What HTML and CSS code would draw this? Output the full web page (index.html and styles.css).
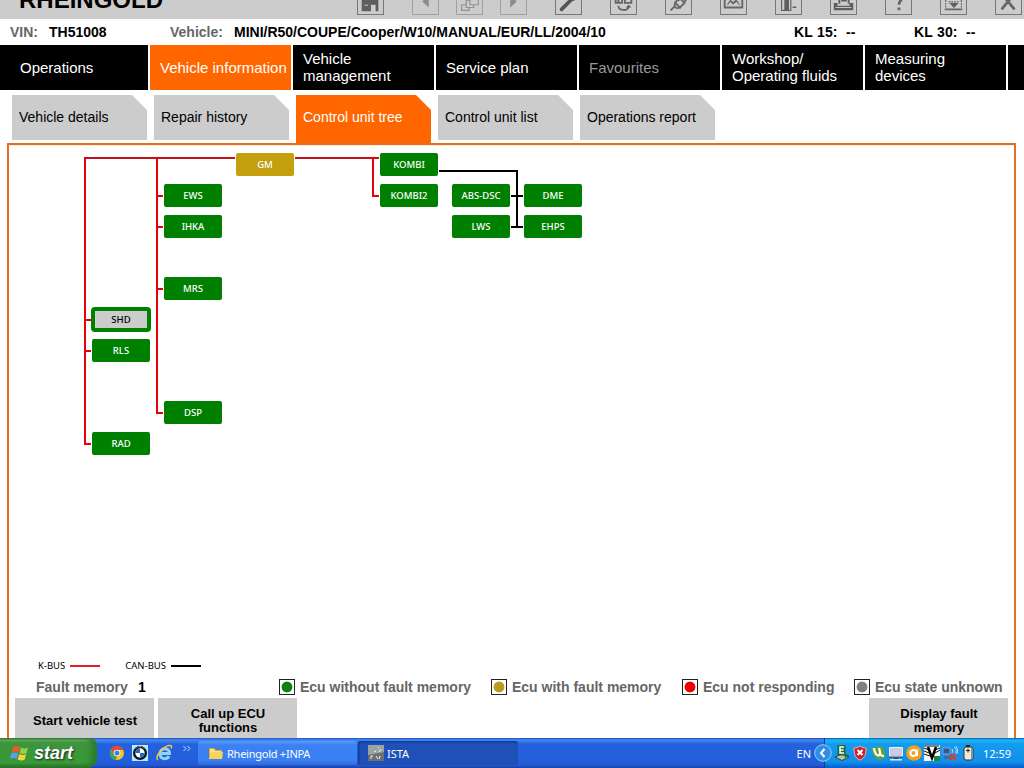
FILE: index.html
```html
<!DOCTYPE html>
<html lang="en">
<head>
  <meta charset="UTF-8">
  <meta name="viewport" content="width=device-width, initial-scale=1.0">
  <title>Rheingold - Control unit tree</title>
  <link rel="stylesheet" href="styles.css">
</head>
<body>
  <div class="screen">
    <!-- Title bar -->
    <header class="titlebar">
      <h1>RHEINGOLD</h1>
      <div class="tools">
        <svg class="tool" viewBox="0 0 27 27"><path class="solid" d="M4 12 13 4l9 8v12h-3v-7h-5v7H4z"/><path class="light" d="M7 17.500h4"/></svg>
        <div class="tool-group">
          <svg class="tool dim" viewBox="0 0 27 27"><path class="solid" d="M17 7v13l-7-6.500z"/></svg>
          <svg class="tool dim" viewBox="0 0 27 27"><path class="line" d="M14 6h9v11h-9zM14 12h-4v8h8v-3M10 17H5v6h8v-3"/></svg>
          <svg class="tool dim" viewBox="0 0 27 27"><path class="solid" d="M10 7v13l7-6.500z"/></svg>
        </div>
        <svg class="tool" viewBox="0 0 27 27"><path class="thick" d="M6 22 17 11"/><path class="line thick2" d="M22 9l-3 3-4-2 1-5"/></svg>
        <svg class="tool" viewBox="0 0 27 27"><path class="line thick2" d="M5 6h7v9H5zM15 6h7v9h-7zM8 18c0 6 11 6 11 1"/><path class="solid" d="M7 12h2v2H7zM17 10h4v2h-4zM16 20l3-3 3 3z"/></svg>
        <svg class="tool" viewBox="0 0 27 27"><path class="line thick2" d="M5 23l4-4M9 14l7 7M10 15c-2 4 1 7 5 5l5-5-6-6zM13 13l5-7M19 15l4-5"/></svg>
        <svg class="tool" viewBox="0 0 27 27"><path class="line thick2" d="M4 6h19v14H4z"/><path class="line" d="M7 17l3-4 3 3 4-3 3 4M5 7l8 8 9-8"/></svg>
        <svg class="tool" viewBox="0 0 27 27"><path class="line" d="M6 5h10v18H6z"/><path class="solid" d="M9 8h5v15H9zM18 19h4v1.500h-4z"/></svg>
        <svg class="tool" viewBox="0 0 27 27"><path class="solid" d="M8 4h12v12h-2V7h-8v9H8zM3 15h4v3h13v-3h4v8H3zM11 12h6v1.500h-6z"/><path class="light" d="M5 20h17"/></svg>
        <svg class="tool" viewBox="0 0 27 27"><path class="line thick3" d="M9 9c0-6 9-5 9-1 0 4-4 4-4 9M14 20v3"/></svg>
        <svg class="tool" viewBox="0 0 27 27"><path class="line thick2" d="M4 5h19M4 22h19"/><path class="line dots" d="M5 6v15M22 6v15M8 14h12"/><path class="solid" d="M9 15h10l-5 5.500z"/></svg>
        <svg class="tool" viewBox="0 0 27 27"><path class="line thick3" d="M6 5l14 17M20 5L6 22"/></svg>
      </div>
    </header>

    <!-- Vehicle info -->
    <div class="infobar">
      <span class="label vin-label">VIN:</span>
      <span class="vin">TH51008</span>
      <span class="label vehicle-label">Vehicle:</span>
      <span class="vehicle">MINI/R50/COUPE/Cooper/W10/MANUAL/EUR/LL/2004/10</span>
      <span class="terminal">KL 15:&nbsp; --</span>
      <span class="terminal">KL 30:&nbsp; --</span>
    </div>

    <nav class="main-nav">
      <a>Operations</a>
      <a class="active">Vehicle information</a>
      <a>Vehicle<br>management</a>
      <a>Service plan</a>
      <a class="disabled">Favourites</a>
      <a>Workshop/<br>Operating fluids</a>
      <a>Measuring<br>devices</a>
      <a></a>
    </nav>

    <nav class="sub-nav">
      <a>Vehicle details</a>
      <a>Repair history</a>
      <a class="active">Control unit tree</a>
      <a>Control unit list</a>
      <a>Operations report</a>
    </nav>

    <main class="panel">
      <!-- Control unit tree -->
      <div class="tree">
        <svg class="bus" width="1005" height="510">
          <g class="k-top">
            <path d="M75 13H226M286 13H370"/>
          </g>
          <g class="k-bus">
            <path d="M76 12V299H82M76 175H82M76 206H82"/>
            <path d="M148 12V268H154M148 51H154M148 82H154M148 144H154"/>
            <path d="M364 12V51H370"/>
          </g>
          <g class="can-bus">
            <path d="M430 26H508V82M502 51H514M502 82H514"/>
          </g>
        </svg>
        <div class="ecu fault gm">GM</div>
        <div class="ecu ews">EWS</div>
        <div class="ecu ihka">IHKA</div>
        <div class="ecu mrs">MRS</div>
        <div class="ecu dsp">DSP</div>
        <div class="ecu selected shd">SHD</div>
        <div class="ecu rls">RLS</div>
        <div class="ecu rad">RAD</div>
        <div class="ecu kombi">KOMBI</div>
        <div class="ecu kombi2">KOMBI2</div>
        <div class="ecu abs">ABS-DSC</div>
        <div class="ecu lws">LWS</div>
        <div class="ecu dme">DME</div>
        <div class="ecu ehps">EHPS</div>
      </div>

      <div class="bus-legend">
        <span>K-BUS</span><i class="k"></i>
        <span>CAN-BUS</span><i class="can"></i>
      </div>

      <div class="status">
        <span class="fault-label">Fault memory</span>
        <span class="fault-count">1</span>
        <span class="state"><i class="green"></i>Ecu without fault memory</span>
        <span class="state with"><i class="gold"></i>Ecu with fault memory</span>
        <span class="state no"><i class="red"></i>Ecu not responding</span>
        <span class="state unknown"><i class="gray"></i>Ecu state unknown</span>
      </div>

      <div class="actions">
        <button>Start vehicle test</button>
        <button>Call up ECU<br>functions</button>
        <button class="last">Display fault<br>memory</button>
      </div>
    </main>

    <!-- Windows taskbar -->
    <footer class="taskbar">
      <div class="start">
        <svg width="20" height="20" viewBox="0 0 20 20">
          <path fill="#ee5a24" d="M3 4q3-2 7 0L8.500 9.500q-3-2-7 0z"/>
          <path fill="#8fd14a" d="M11 4.500q4 2 7 0L16.500 10q-3 2-7 0z"/>
          <path fill="#5b9bf0" d="M1.200 10.500q4-2 7 0L6.700 16q-3-2-7 0z"/>
          <path fill="#fbd03a" d="M9.200 11q4 2 7 0l-1.500 5.500q-3 2-7 0z"/>
        </svg>
        <span>start</span>
      </div>
      <div class="quick">
        <svg width="16" height="16" viewBox="0 0 16 16">
          <circle cx="8" cy="8" r="7" fill="#f2c72e"/>
          <path fill="#dc4a38" d="M1.800 4.500A7 7 0 0 1 14.500 5H8L5 9.500z"/>
          <path fill="#45a350" d="M1.800 4.500 5 9.500l3 2L7 15A7 7 0 0 1 1.800 4.500z"/>
          <circle cx="8" cy="8" r="3.300" fill="#fff"/><circle cx="8" cy="8" r="2.500" fill="#3c7fe0"/>
        </svg>
        <svg width="16" height="16" viewBox="0 0 16 16">
          <path fill="#b4ecff" d="M0 0h16v16H0z"/>
          <circle cx="8" cy="8" r="7" fill="#111"/><circle cx="8" cy="8" r="4.700" fill="#fff"/>
          <path fill="#2467c8" d="M8 8V3.300A4.700 4.700 0 0 0 3.300 8zM8 8v4.700A4.700 4.700 0 0 0 12.700 8z"/>
          <path stroke="#ddd" stroke-width=".8" d="M4 3.500l1-1M7 1.800h2M11 2.500l1 1"/>
        </svg>
        <svg width="18" height="18" viewBox="0 0 18 18">
          <path fill="none" stroke="#8ed4fa" stroke-width="3" d="M5 9.500h9.500C14.500 3 5 3 5 9.800c0 6 7 6 9 2.500"/>
          <path fill="none" stroke="#f4c63c" stroke-width="1.500" d="M3 16C-1 14 7 3 14 1.500c3-.5 3 1 2 3"/>
        </svg>
        <svg class="more" width="8" height="8" viewBox="0 0 8 8"><path d="M.5 1 3 3.500.5 6M4.500 1 7 3.500 4.500 6"/></svg>
      </div>
      <div class="task">
        <svg width="16" height="16" viewBox="0 0 16 16">
          <path fill="#d9a431" d="M1 3h5l2 2h6v9H1z"/><path fill="#fce588" d="M2 4h4l1 2h6v7H2z"/><path fill="#f8d35c" d="M3 7h12l-1 7H1z"/>
        </svg>
        <span>Rheingold +INPA</span>
      </div>
      <div class="task pressed">
        <svg width="16" height="16" viewBox="0 0 16 16">
          <path fill="#6a7173" d="M0 0h16v16H0z"/><path fill="#9ba2a3" d="M0 0h16v7L0 10z"/>
          <path fill="none" stroke="#f4f4f4" d="M3 11v3M3 11h2M8 11l2 3M12 11l-1 3M13 4l-2 3M6 7l2-1M10 2l1 1"/>
        </svg>
        <span>ISTA</span>
      </div>
      <span class="lang">EN</span>
      <div class="tray">
        <svg class="chevron" width="18" height="18" viewBox="0 0 18 18">
          <circle cx="9" cy="9" r="8.300" fill="#2f8fe2" stroke="#8fd0ff"/><path fill="none" stroke="#fff" stroke-width="2" d="M10.500 5 7 9l3.500 4"/>
        </svg>
        <svg width="16" height="16" viewBox="0 0 16 16">
          <path fill="#b9c4b4" stroke="#28482c" d="M1 12l5-2h5l4 2-7 3.500z"/><path fill="#18702c" d="M3.500 0h8v10h-8zM10 9l5 1-4 3z"/>
          <path fill="none" stroke="#fff" stroke-width="1.500" d="M10 2H6v6h4M6 5h3.500"/>
        </svg>
        <svg width="16" height="16" viewBox="0 0 16 16">
          <path fill="#c9202c" stroke="#eeb1b0" d="M8 1c2 1.500 4 2 6 2 0 6-1 10-6 12C3 13 2 9 2 3c2 0 4-.5 6-2z"/><path stroke="#fff" stroke-width="2" d="M5.500 5l5 5M10.500 5l-5 5"/>
        </svg>
        <svg width="16" height="16" viewBox="0 0 16 16">
          <path fill="#5da33c" d="M1 3l10-2c4 2 5 8 4 12l-5 2C5 14 2 10 1 3z"/><path fill="none" stroke="#fff" stroke-width="2.200" d="M4 3c1 9 7 9 6 4L9 3M10 7c0 4 2 4 4 4"/>
        </svg>
        <svg width="16" height="16" viewBox="0 0 16 16">
          <path fill="#c9cbe0" stroke="#f1f1f8" d="M1.500 2.500h13v9h-13z"/><path fill="#3b3d66" d="M1 11.500h14v1H1zM6 13h4v1H6z"/><path fill="#e4e4ee" d="M2 14h12v1.500H2z"/>
        </svg>
        <svg width="16" height="16" viewBox="0 0 16 16">
          <circle cx="8" cy="8" r="7.800" fill="#f5a01f"/><circle cx="7.500" cy="8" r="3" fill="none" stroke="#fff" stroke-width="2"/><path fill="none" stroke="#fff" stroke-width="2" d="M11 4.500V11"/>
        </svg>
        <svg width="16" height="16" viewBox="0 0 16 16">
          <path fill="#f7f7f7" d="M0 0h16v16H0z"/><path fill="none" stroke="#111" d="M0 3l5 2M0 6l5 2M0 9l6 2M11 5l5-2M11 8l5-3M0 1h15"/><path fill="none" stroke="#000" stroke-width="2.500" d="M4 2l4 11 4-11"/><path fill="#188a3c" d="M10 11h6v5h-6z"/>
        </svg>
        <svg width="16" height="16" viewBox="0 0 16 16">
          <path fill="#36588e" stroke="#8db5e5" stroke-width=".8" d="M1 3h7v6H1z"/><path fill="#47689b" d="M2 11h7v3H2z"/><path fill="none" stroke="#bddcff" d="M10 4q2 2 0 4M12 2q4 3 1 7M14 1q3 4 1 8"/><path stroke="#e13b2c" stroke-width="2" d="M8 9l6 6M14 9l-6 6"/>
        </svg>
        <svg width="16" height="16" viewBox="0 0 16 16">
          <rect x="4" y="2" width="9" height="13" rx="2" fill="#eceade" stroke="#34362e"/><path fill="#222" d="M6 0h4v2H6zM6 5h4v1H6zM7.500 3.500h1v4h-1z"/><path fill="#8e9188" d="M11 3h1.500v11H11z"/>
        </svg>
        <span class="clock">12:59</span>
      </div>
    </footer>
  </div>
</body>
</html>
```

FILE: styles.css
```css
* {
  box-sizing: border-box;
}

body {
  margin: 0;
  background: #fff;
  font-family: "Liberation Sans", Arial, sans-serif;
  overflow: hidden;
}

.screen {
  width: 1024px;
  height: 768px;
  display: flex;
  flex-direction: column;
  overflow: hidden;
}

svg {
  display: block;
  flex: none;
}

/* Title bar */
.titlebar {
  height: 19px;
  display: flex;
  align-items: flex-end;
  justify-content: space-between;
  background: #ccc;
  overflow: hidden;
  flex: none;
}

.titlebar h1 {
  margin: 0 0 7px 19px;
  font-size: 24px;
  line-height: 24px;
}

.tools {
  display: flex;
  gap: 28px;
  margin: 0 2px 4px 0;
}

.tool-group {
  display: flex;
  gap: 17px;
}

.tool {
  width: 27px;
  height: 27px;
  border: 1px solid #777;
}

.tool.dim {
  border-color: #999;
  opacity: 0.85;
}

.tool .solid {
  fill: #5e5e5e;
}

.tool.dim .solid {
  fill: #808080;
}

.tool .line {
  fill: none;
  stroke: #666;
  stroke-width: 1.3;
}

.tool.dim .line {
  stroke: #888;
}

.tool .thick {
  stroke: #555;
  stroke-width: 4;
  stroke-linecap: round;
}

.tool .thick2 {
  stroke-width: 2;
}

.tool .thick3 {
  stroke-width: 3;
}

.tool .dots {
  stroke-dasharray: 2 1;
}

.tool .light {
  stroke: #ccc;
}

/* Vehicle info */
.infobar {
  height: 26px;
  display: flex;
  align-items: center;
  padding-left: 10px;
  font-size: 14px;
  font-weight: bold;
  white-space: nowrap;
  flex: none;
}

.infobar span {
  flex: none;
}

.label {
  color: #666;
}

.vin-label {
  width: 39px;
}

.vin {
  width: 121px;
}

.vehicle-label {
  width: 64px;
}

.vehicle {
  width: 560px;
}

.terminal {
  width: 120px;
  letter-spacing: 0.2px;
}

/* Main navigation */
.main-nav {
  height: 45px;
  display: grid;
  grid-template-columns: 148px repeat(6, 141px) 1fr;
  gap: 2px;
  flex: none;
}

.main-nav a {
  display: flex;
  align-items: center;
  padding: 0 0 1px 10px;
  background: #000;
  color: #fff;
  font-size: 15px;
  line-height: 17px;
  white-space: nowrap;
}

.main-nav a:first-child {
  padding-left: 20px;
}

.main-nav .active {
  background: #f60;
}

.main-nav .disabled {
  color: #999;
}

/* Sub navigation */
.sub-nav {
  height: 53px;
  display: flex;
  gap: 7px;
  padding: 5px 0 0 12px;
  flex: none;
}

.sub-nav a {
  width: 135px;
  height: 45px;
  padding-left: 7px;
  background: #ccc;
  clip-path: polygon(0 0, 120px 0, 100% 15px, 100% 100%, 0 100%);
  font-size: 14px;
  line-height: 45px;
  white-space: nowrap;
}

.sub-nav .active {
  height: 48px;
  background: #f60;
  color: #fff;
}

/* Content panel */
.panel {
  width: 1009px;
  height: 595px;
  margin-left: 7px;
  border: 2px solid #e2702a;
  border-bottom: none;
  display: flex;
  flex-direction: column;
  flex: none;
}

.tree {
  position: relative;
  height: 510px;
  border-top: 1px solid #ffedcc;
}

.bus path {
  fill: none;
  stroke-width: 2;
}

.k-bus {
  stroke: #e60008;
}

.k-top {
  stroke: #c4101c;
}

.can-bus {
  stroke: #000;
}

.bus {
  margin-top: -1px;
}

.ecu {
  position: absolute;
  width: 58px;
  height: 23px;
  border-radius: 2px;
  background: #008000;
  color: #fff;
  font-family: "Noto Sans", sans-serif;
  font-size: 9.5px;
  font-weight: 500;
  line-height: 24px;
  text-align: center;
}

.ecu.fault {
  background: #c4a00e;
}

.ecu.selected {
  width: 60px;
  height: 25px;
  border: 4px solid #008000;
  border-radius: 4px;
  background: #ccc;
  color: #000;
  line-height: 18px;
}

.gm { left: 227px; top: 7px; }
.ews { left: 155px; top: 38px; }
.ihka { left: 155px; top: 69px; }
.mrs { left: 155px; top: 131px; }
.dsp { left: 155px; top: 255px; }
.shd { left: 82px; top: 161px; }
.rls { left: 83px; top: 193px; }
.rad { left: 83px; top: 286px; }
.kombi { left: 371px; top: 7px; }
.kombi2 { left: 371px; top: 38px; }
.abs { left: 443px; top: 38px; }
.lws { left: 443px; top: 69px; }
.dme { left: 515px; top: 38px; }
.ehps { left: 515px; top: 69px; }

.bus-legend {
  height: 20px;
  display: flex;
  align-items: center;
  padding-left: 29px;
  font-family: "Noto Sans", sans-serif;
  font-size: 9.5px;
}

.bus-legend i {
  width: 30px;
  height: 2px;
  margin: 1px 24px 0 5px;
  background: #000;
}

.bus-legend .k {
  margin-right: 25px;
  background: #e02020;
}

.status {
  height: 23px;
  display: flex;
  align-items: center;
  padding-left: 27px;
  color: #666;
  font-size: 14px;
  font-weight: bold;
  white-space: nowrap;
}

.fault-label {
  width: 102px;
}

.fault-count {
  width: 141px;
  color: #000;
}

.state {
  width: 212px;
  display: flex;
  align-items: center;
}

.state.with {
  width: 191px;
}

.state.no {
  width: 172px;
}

.state.unknown {
  width: auto;
}

.state i {
  width: 16px;
  height: 16px;
  margin-right: 5px;
  border: 1px solid #222;
  background: radial-gradient(circle, currentColor 5px, #fff 5.8px);
}

.state .green {
  color: #108010;
}

.state .gold {
  color: #b89c20;
}

.state .red {
  color: #f00000;
}

.state .gray {
  color: #808080;
}

.actions {
  display: flex;
  gap: 4px;
  padding: 0 6px 0 6px;
}

.actions button {
  width: 139px;
  height: 40px;
  padding: 6px 0 0 1px;
  border: none;
  background: #ccc;
  color: #000;
  font-family: inherit;
  font-size: 13px;
  font-weight: bold;
  line-height: 14px;
}

.actions .last {
  margin-left: auto;
}

/* Taskbar */
.taskbar {
  height: 30px;
  display: flex;
  align-items: center;
  background: linear-gradient(#1f50bd 0, #4389f1 2px, #3a80ed 3px, #2561dd 6px, #245edb 22px, #225ad6 27px, #1941a5 30px);
  color: #fff;
  font-family: "Noto Sans", sans-serif;
  font-size: 11px;
  flex: none;
}

.start {
  width: 97px;
  height: 30px;
  display: flex;
  align-items: center;
  padding-left: 10px;
  border-radius: 0 8px 10px 0;
  background: linear-gradient(#2a702a 0, #6bb56b 2px, #3f953f 5px, #389838 20px, #3a9c3a 25px, #236a23 30px);
  box-shadow: inset -5px 0 6px #2c782c;
}

.start span {
  margin: 0 0 0 4px;
  font-family: "Liberation Sans", Arial, sans-serif;
  font-size: 18px;
  font-style: italic;
  font-weight: bold;
  text-shadow: 1px 1px 2px #222;
}

.quick {
  width: 101px;
  display: flex;
  align-items: center;
  gap: 7px;
  padding-left: 12px;
}

.more {
  margin: -9px 0 0 3px;
}

.more path {
  fill: none;
  stroke: #cfe2ff;
}

.task {
  width: 159px;
  height: 24px;
  display: flex;
  align-items: center;
  gap: 3px;
  margin-right: 1px;
  padding-left: 10px;
  border-radius: 3px;
  background: linear-gradient(#5a9cf8, #3c81f3 4px, #3b80f2 19px, #2f6bdc);
  letter-spacing: -0.25px;
}

.task.pressed {
  width: 160px;
  background: #1e50b8;
  box-shadow: inset 1px 1px 2px #0e3689;
  letter-spacing: 0;
}

.lang {
  margin-left: auto;
  margin-right: 13px;
}

.tray {
  width: 200px;
  height: 30px;
  display: flex;
  align-items: center;
  gap: 2px;
  border-left: 1px solid #103f8f;
  background: linear-gradient(#0c59b9 0, #19b9f3 2px, #149bee 6px, #118fe9 24px, #095bc9 30px);
}

.chevron {
  margin-left: -11px;
}

.clock {
  margin-left: 5px;
}
```
